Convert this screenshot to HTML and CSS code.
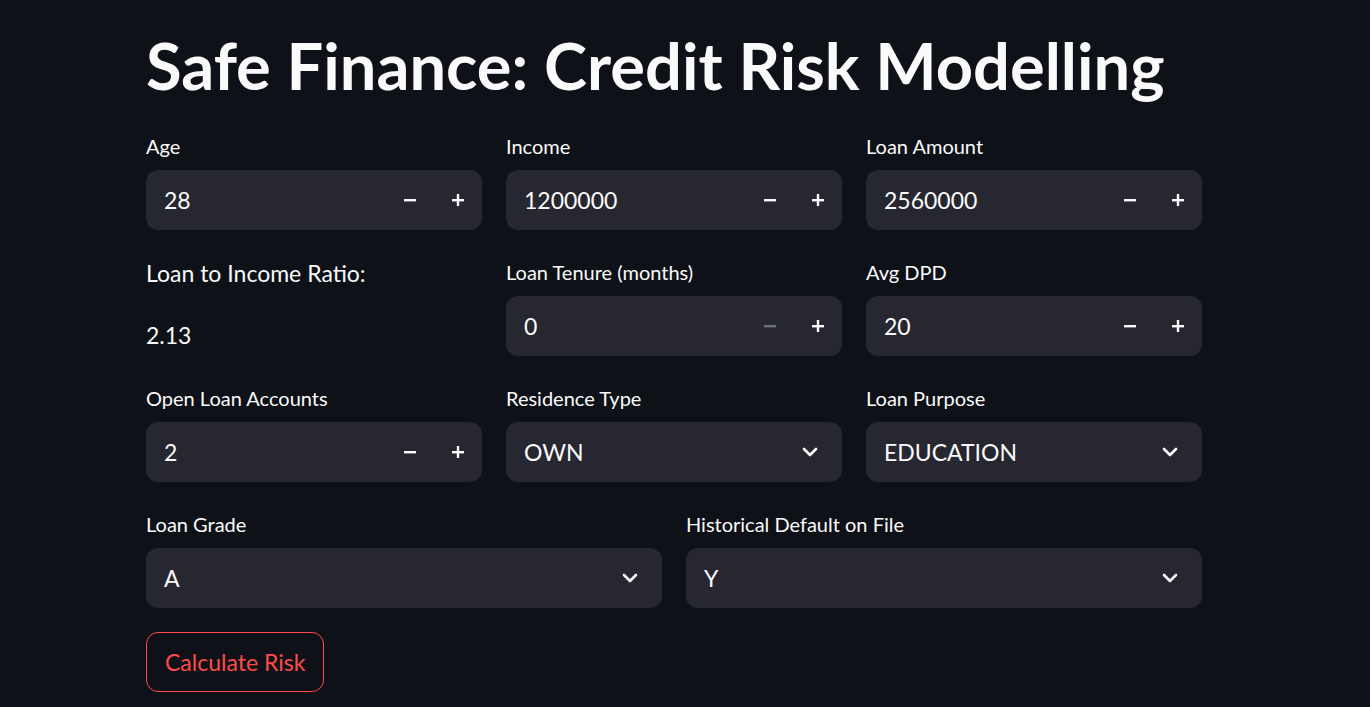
FILE: index.html
```html
<!DOCTYPE html>
<html lang="en">
<head>
<meta charset="utf-8">
<title>Safe Finance: Credit Risk Modelling</title>
<link rel="stylesheet" href="styles.css">
</head>
<body>
<main class="page">
  <h1 class="title">Safe Finance: Credit Risk Modelling</h1>

  <div class="row row-3">
    <div class="field">
      <label class="label">Age</label>
      <div class="input">
        <span class="value">28</span>
        <div class="steps">
          <span class="step"><svg viewBox="0 0 12 12" width="12" height="12"><rect x="0" y="5" width="12" height="2.4" fill="currentColor"/></svg></span>
          <span class="step"><svg viewBox="0 0 12 12" width="12" height="12"><rect x="0" y="5" width="12" height="2.4" fill="currentColor"/><rect x="4.8" y="0" width="2.4" height="12" fill="currentColor"/></svg></span>
        </div>
      </div>
    </div>
    <div class="field">
      <label class="label">Income</label>
      <div class="input">
        <span class="value">1200000</span>
        <div class="steps">
          <span class="step"><svg viewBox="0 0 12 12" width="12" height="12"><rect x="0" y="5" width="12" height="2.4" fill="currentColor"/></svg></span>
          <span class="step"><svg viewBox="0 0 12 12" width="12" height="12"><rect x="0" y="5" width="12" height="2.4" fill="currentColor"/><rect x="4.8" y="0" width="2.4" height="12" fill="currentColor"/></svg></span>
        </div>
      </div>
    </div>
    <div class="field">
      <label class="label">Loan Amount</label>
      <div class="input">
        <span class="value">2560000</span>
        <div class="steps">
          <span class="step"><svg viewBox="0 0 12 12" width="12" height="12"><rect x="0" y="5" width="12" height="2.4" fill="currentColor"/></svg></span>
          <span class="step"><svg viewBox="0 0 12 12" width="12" height="12"><rect x="0" y="5" width="12" height="2.4" fill="currentColor"/><rect x="4.8" y="0" width="2.4" height="12" fill="currentColor"/></svg></span>
        </div>
      </div>
    </div>
  </div>

  <div class="row row-3">
    <div class="field">
      <p class="md">Loan to Income Ratio:</p>
      <p class="md">2.13</p>
    </div>
    <div class="field">
      <label class="label">Loan Tenure (months)</label>
      <div class="input">
        <span class="value">0</span>
        <div class="steps">
          <span class="step disabled"><svg viewBox="0 0 12 12" width="12" height="12"><rect x="0" y="5" width="12" height="2.4" fill="currentColor"/></svg></span>
          <span class="step"><svg viewBox="0 0 12 12" width="12" height="12"><rect x="0" y="5" width="12" height="2.4" fill="currentColor"/><rect x="4.8" y="0" width="2.4" height="12" fill="currentColor"/></svg></span>
        </div>
      </div>
    </div>
    <div class="field">
      <label class="label">Avg DPD</label>
      <div class="input">
        <span class="value">20</span>
        <div class="steps">
          <span class="step"><svg viewBox="0 0 12 12" width="12" height="12"><rect x="0" y="5" width="12" height="2.4" fill="currentColor"/></svg></span>
          <span class="step"><svg viewBox="0 0 12 12" width="12" height="12"><rect x="0" y="5" width="12" height="2.4" fill="currentColor"/><rect x="4.8" y="0" width="2.4" height="12" fill="currentColor"/></svg></span>
        </div>
      </div>
    </div>
  </div>

  <div class="row row-3">
    <div class="field">
      <label class="label">Open Loan Accounts</label>
      <div class="input">
        <span class="value">2</span>
        <div class="steps">
          <span class="step"><svg viewBox="0 0 12 12" width="12" height="12"><rect x="0" y="5" width="12" height="2.4" fill="currentColor"/></svg></span>
          <span class="step"><svg viewBox="0 0 12 12" width="12" height="12"><rect x="0" y="5" width="12" height="2.4" fill="currentColor"/><rect x="4.8" y="0" width="2.4" height="12" fill="currentColor"/></svg></span>
        </div>
      </div>
    </div>
    <div class="field">
      <label class="label">Residence Type</label>
      <div class="input select">
        <span class="value">OWN</span>
        <span class="chev"><svg viewBox="0 0 16 10" width="16" height="10"><polyline points="2,2 8,8 14,2" fill="none" stroke="currentColor" stroke-width="2.6" stroke-linecap="round" stroke-linejoin="round"/></svg></span>
      </div>
    </div>
    <div class="field">
      <label class="label">Loan Purpose</label>
      <div class="input select">
        <span class="value">EDUCATION</span>
        <span class="chev"><svg viewBox="0 0 16 10" width="16" height="10"><polyline points="2,2 8,8 14,2" fill="none" stroke="currentColor" stroke-width="2.6" stroke-linecap="round" stroke-linejoin="round"/></svg></span>
      </div>
    </div>
  </div>

  <div class="row row-2">
    <div class="field">
      <label class="label">Loan Grade</label>
      <div class="input select">
        <span class="value">A</span>
        <span class="chev"><svg viewBox="0 0 16 10" width="16" height="10"><polyline points="2,2 8,8 14,2" fill="none" stroke="currentColor" stroke-width="2.6" stroke-linecap="round" stroke-linejoin="round"/></svg></span>
      </div>
    </div>
    <div class="field">
      <label class="label">Historical Default on File</label>
      <div class="input select">
        <span class="value">Y</span>
        <span class="chev"><svg viewBox="0 0 16 10" width="16" height="10"><polyline points="2,2 8,8 14,2" fill="none" stroke="currentColor" stroke-width="2.6" stroke-linecap="round" stroke-linejoin="round"/></svg></span>
      </div>
    </div>
  </div>

  <div class="actions">
    <button class="btn" type="button">Calculate Risk</button>
  </div>
</main>
</body>
</html>
```

FILE: styles.css
```css
html, body {
  margin: 0;
  padding: 0;
  background: #0e1117;
  color: #fafafa;
  font-family: "Lato", "Noto Sans", sans-serif;
  overflow: hidden;
}

.page {
  width: 1056px;
  margin-left: 146px;
  padding-top: 27px;
  display: flex;
  flex-direction: column;
  gap: 24px;
}

.title {
  margin: 0;
  height: 77px;
  font-size: 65px;
  font-weight: 700;
  line-height: 77px;
  color: #fafafa;
  letter-spacing: 0;
  white-space: nowrap;
}

.row {
  display: grid;
  column-gap: 24px;
}

.row-3 { grid-template-columns: repeat(3, 1fr); }
.row-2 { grid-template-columns: repeat(2, 1fr); }

.field {
  display: flex;
  flex-direction: column;
  min-width: 0;
}

.label {
  display: flex;
  align-items: center;
  height: 36px;
  margin-bottom: 6px;
  font-size: 20px;
  color: #fafafa;
}

.input {
  height: 60px;
  background: #262730;
  border-radius: 12px;
  display: flex;
  align-items: center;
  padding-left: 18px;
  box-sizing: border-box;
}

.value {
  flex: 1;
  font-size: 23px;
  color: #fafafa;
}

.steps {
  display: flex;
  height: 100%;
}

.step {
  width: 48px;
  display: flex;
  align-items: center;
  justify-content: center;
  color: #fafafa;
}

.step.disabled {
  color: #6d6f7c;
}

.select {
  padding-right: 24px;
}

.chev {
  display: flex;
  color: #fafafa;
}

.md {
  margin: 0 0 24px 0;
  font-size: 23px;
  line-height: 38px;
}

.md:last-child {
  margin-bottom: 0;
}

.actions {
  display: flex;
}

.btn {
  height: 60px;
  padding: 0 18px;
  background: #0e1117;
  border: 1px solid #ff4b4b;
  border-radius: 12px;
  color: #ff4b4b;
  font-family: inherit;
  font-size: 23px;
  white-space: nowrap;
}
```
